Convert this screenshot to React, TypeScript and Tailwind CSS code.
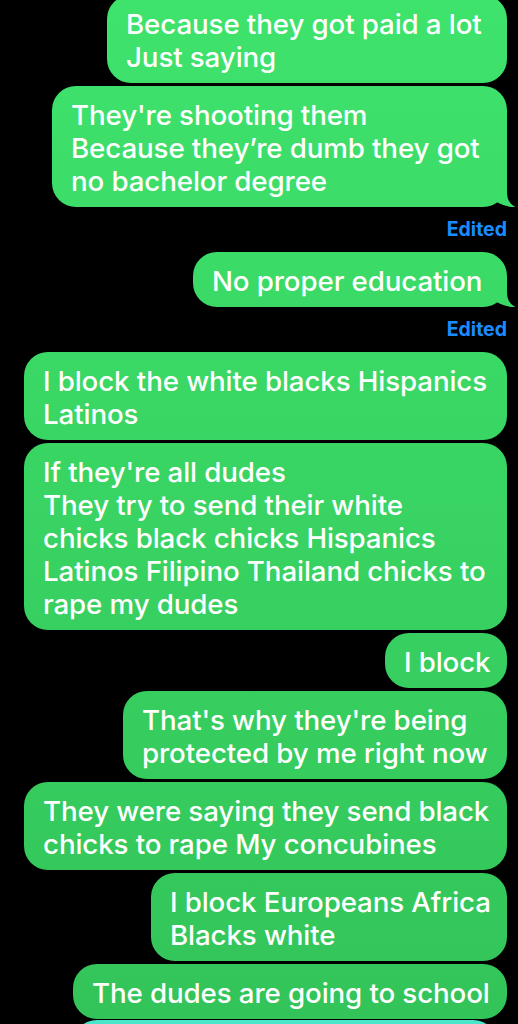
import React from "react";

type Msg = { lines: string[]; w: number; tail?: boolean; edited?: boolean; first?: boolean };

const msgs: Msg[] = [
  { lines: ["Because they got paid a lot", "Just saying"], w: 400, first: true },
  { lines: ["They're shooting them", "Because they’re dumb they got", "no bachelor degree"], w: 455, tail: true, edited: true },
  { lines: ["No proper education"], w: 314, tail: true, edited: true },
  { lines: ["I block the white blacks Hispanics", "Latinos"], w: 483 },
  { lines: ["If they're all dudes", "They try to send their white", "chicks black chicks Hispanics", "Latinos Filipino Thailand chicks to", "rape my dudes"], w: 483 },
  { lines: ["I block"], w: 122 },
  { lines: ["That's why they're being", "protected by me right now"], w: 384 },
  { lines: ["They were saying they send black", "chicks to rape My concubines"], w: 483 },
  { lines: ["I block Europeans Africa", "Blacks white"], w: 356 },
  { lines: ["The dudes are going to school"], w: 434 },
];

function Tail() {
  return (
    <div className="absolute right-[-9px] bottom-0 w-[24px] h-[26px] bg-[linear-gradient(180deg,#3ee36c_0%,#33c459_100%)] bg-fixed [clip-path:path('M0_0H15V11C15_18_17.5_23.5_23.5_26C17_26.3_10.5_24.5_5_21.3L0_0Z')]" />
  );
}

export default function App() {
  return (
    <div
      className="w-[518px] h-[1024px] overflow-hidden bg-black flex flex-col items-end pr-[11px]"
      style={{ fontFamily: "Inter, 'Noto Sans', sans-serif" }}
    >
      {msgs.map((m, i) => (
        <React.Fragment key={i}>
          <div
            className={`relative shrink-0 rounded-[24px] px-[19px] pt-[13px] pb-[9px] text-white text-[27.7px] font-medium leading-[33px] tracking-[-0.1px] whitespace-nowrap bg-[linear-gradient(180deg,#3ee36c_0%,#33c459_100%)] bg-fixed ${
              m.first ? "mt-[-5px]" : "mt-[3px]"
            }`}
            style={{ width: m.w }}
          >
            {m.lines.map((l, j) => (
              <div key={j}>{l}</div>
            ))}
            {m.tail && <Tail />}
          </div>
          {m.edited && (
            <div className="shrink-0 h-[42px] flex items-center text-[#1a8cff] text-[19.5px] font-bold leading-none pt-[3px]">
              Edited
            </div>
          )}
        </React.Fragment>
      ))}
      <div className="shrink-0 mt-[1px] w-[424px] h-[50px] mr-[10px] rounded-[24px] bg-[#4ae6cb]" />
    </div>
  );
}
